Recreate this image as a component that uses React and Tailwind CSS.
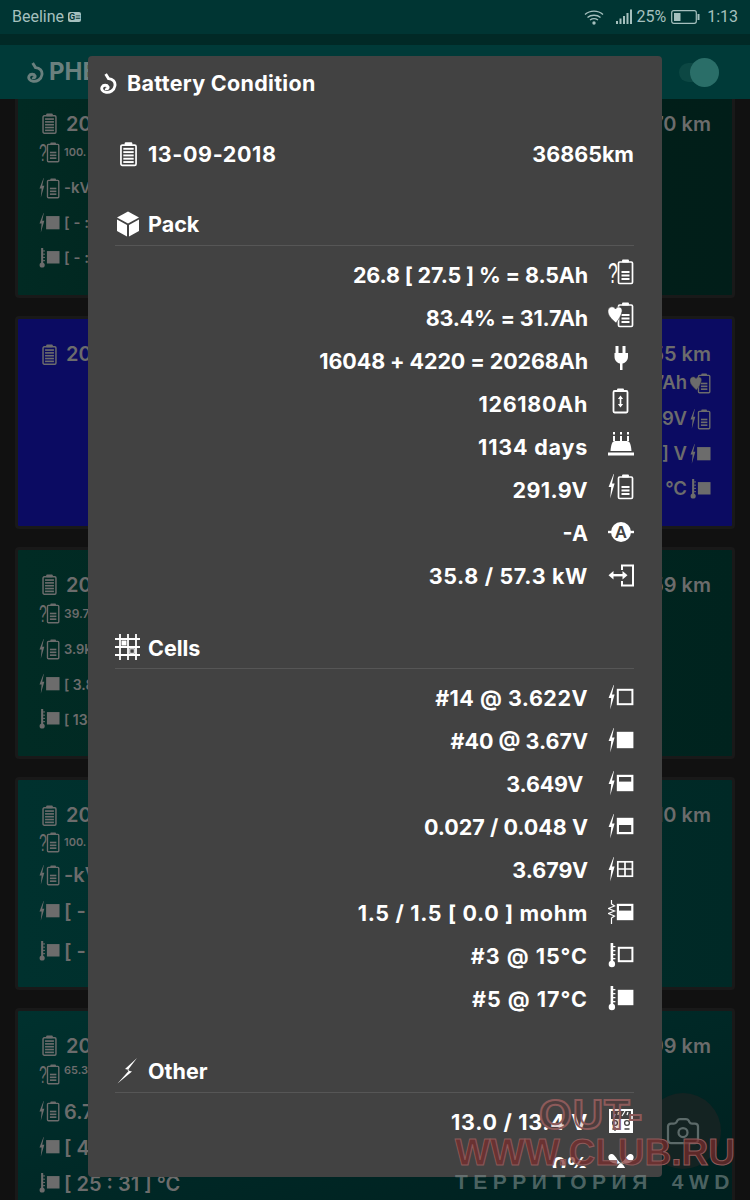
import { Camera } from 'lucide-react'

function Bolt() {
  return <polygon points="5.6,0 0.6,13 3.2,13 2.2,24.5 6.6,9.5 4,9.5 6,0" fill="currentColor" />
}

function Therm() {
  return (
    <g fill="currentColor">
      <rect x="2.6" y="0" width="2.6" height="20" />
      <circle cx="3.9" cy="21" r="3.2" />
      <rect x="5" y="3" width="2.4" height="1.3" />
      <rect x="5" y="7" width="2.4" height="1.3" />
      <rect x="5" y="11" width="2.4" height="1.3" />
      <rect x="5" y="15" width="2.4" height="1.3" />
    </g>
  )
}

function BatteryShape({ x = 10.5 }) {
  return (
    <g>
      <rect x={x} y="3" width="14" height="21.5" rx="1.2" fill="none" stroke="currentColor" strokeWidth="1.7" />
      <rect x={x + 3.5} y="0.5" width="7" height="3" rx="1" fill="currentColor" />
      <rect x={x + 3} y="12" width="8" height="2" fill="currentColor" />
      <rect x={x + 3} y="15.5" width="8" height="2" fill="currentColor" />
      <rect x={x + 3} y="19" width="8" height="2" fill="currentColor" />
    </g>
  )
}

function Icon({ name, className = 'h-[26px] w-[26px]' }) {
  return (
    <svg viewBox="0 0 26 26" className={`shrink-0 ${className}`}>
      {name === 'q' && (
        <g>
          <text transform="translate(0 24) scale(0.58 1)" fontSize="30" fill="currentColor" className="font-['Liberation_Sans',sans-serif] font-normal">?</text>
          <BatteryShape />
        </g>
      )}
      {name === 'heart' && (
        <g>
          <BatteryShape />
          <path d="M8 21 C3 16.500 -0.500 13 0 8.500 C0.500 4.500 5.500 3.500 7.500 7 C9.500 3.500 15 5 14 9.500 C13.400 13.500 11 17 8 21Z" fill="currentColor" stroke="#424242" strokeWidth="0.6" />
        </g>
      )}
      {name === 'plug' && (
        <path d="M7.500 1h3v7h4V1h3v7h2.500v3.500c0 4-2.600 6.500-5.500 7V25h-2.500v-6.500c-3-.5-5.500-3-5.500-7V8h1z" fill="currentColor" />
      )}
      {name === 'updown' && (
        <g>
          <rect x="5.5" y="3" width="14" height="21.5" rx="1.2" fill="none" stroke="currentColor" strokeWidth="1.8" />
          <rect x="9" y="0.5" width="7" height="3" rx="1" fill="currentColor" />
          <path d="M12.5 7.5l2.6 3.5h-1.800v5h1.800l-2.600 3.500-2.600-3.500h1.800v-5H9.900z" fill="currentColor" />
        </g>
      )}
      {name === 'cake' && (
        <g fill="currentColor">
          <rect x="5" y="1" width="2" height="2.500" />
          <rect x="12" y="1" width="2" height="2.500" />
          <rect x="19" y="1" width="2" height="2.500" />
          <rect x="5" y="5" width="2" height="5" />
          <rect x="12" y="5" width="2" height="5" />
          <rect x="19" y="5" width="2" height="5" />
          <path d="M2.500 20 C3 14 4 10 7 10 H19 C22 10 23 14 23.500 20Z" />
          <rect x="0" y="21.500" width="26" height="3" />
        </g>
      )}
      {name === 'bolt' && (
        <g>
          <Bolt />
          <BatteryShape />
        </g>
      )}
      {name === 'amp' && (
        <g>
          <rect x="0" y="11.8" width="26" height="2.4" fill="currentColor" />
          <circle cx="13" cy="13" r="10" fill="currentColor" />
          <text x="13" y="19.2" textAnchor="middle" fontSize="17" fill="#424242" className="font-['Liberation_Sans',sans-serif] font-bold">A</text>
        </g>
      )}
      {name === 'login' && (
        <g>
          <path d="M14 8V3.500h11v20H14V19" fill="none" stroke="currentColor" strokeWidth="2" />
          <rect x="4" y="12" width="12" height="2.400" fill="currentColor" />
          <path d="M0.500 13.200l5-4.200v8.400zM19.500 13.200l-5-4.200v8.400z" fill="currentColor" />
        </g>
      )}
      {name === 'cellEmpty' && (
        <g>
          <Bolt />
          <rect x="9.8" y="4.8" width="14.6" height="14.4" fill="none" stroke="currentColor" strokeWidth="2" />
        </g>
      )}
      {name === 'cellFull' && (
        <g>
          <Bolt />
          <rect x="8.8" y="3.8" width="16.6" height="16.4" fill="currentColor" />
        </g>
      )}
      {name === 'cellLow' && (
        <g>
          <Bolt />
          <rect x="8.8" y="3.8" width="16.6" height="16.4" fill="currentColor" />
          <rect x="11" y="6" width="12.2" height="4.6" fill="#424242" />
        </g>
      )}
      {name === 'cellMid' && (
        <g>
          <Bolt />
          <rect x="8.8" y="3.8" width="16.6" height="16.4" fill="currentColor" />
          <rect x="11" y="11" width="12.2" height="7" fill="#424242" />
        </g>
      )}
      {name === 'cellGrid' && (
        <g>
          <Bolt />
          <g fill="none" stroke="currentColor" strokeWidth="1.7">
            <rect x="9.8" y="4.8" width="14.6" height="14.4" />
            <path d="M17 5v14M10 12h14" />
          </g>
        </g>
      )}
      {name === 'cellOhm' && (
        <g>
          <path d="M3.5 0v4l3 2-6 2.5 6 2.5-6 2.5 6 2.5-3 2v6" fill="none" stroke="currentColor" strokeWidth="1.2" />
          <rect x="8.8" y="3.8" width="16.6" height="16.4" fill="currentColor" />
          <rect x="11" y="6" width="12.2" height="4.6" fill="#424242" />
        </g>
      )}
      {name === 'thermEmpty' && (
        <g>
          <Therm />
          <rect x="10.8" y="4.8" width="13.6" height="13.4" fill="none" stroke="currentColor" strokeWidth="2" />
        </g>
      )}
      {name === 'thermFull' && (
        <g>
          <Therm />
          <rect x="9.8" y="3.8" width="15.6" height="15.4" fill="currentColor" />
        </g>
      )}
      {name === 'gauge' && (
        <g>
          <rect x="1" y="1" width="24" height="24" fill="currentColor" />
          <path d="M3 3h20v8H3z" fill="#424242" />
          <path d="M6 9l1-3M10 7l.5-3M14 8l3-5M19 7l1-3" stroke="currentColor" strokeWidth="1.2" />
          <circle cx="7" cy="15" r="2.4" fill="none" stroke="#424242" strokeWidth="1.3" />
          <circle cx="19" cy="15" r="2.4" fill="none" stroke="#424242" strokeWidth="1.3" />
          <path d="M4.500 21h5M7 19v4M16.500 21h5" stroke="#424242" strokeWidth="1.3" />
        </g>
      )}
      {name === 'fan' && (
        <g fill="currentColor">
          <path d="M13 12C9 10 7 2 3 3 -1 4 0 9 3 11 6 13 10 13 13 12Z" />
          <path d="M13 12C17 10 19 2 23 3 27 4 26 9 23 11 20 13 16 13 13 12Z" />
          <path d="M13 12C9 14 6 21 9 24 12 26 16 26 18 23 19 19 16 14 13 12Z" />
        </g>
      )}
    </svg>
  )
}

function HookLogo({ className }) {
  return (
    <svg viewBox="0 0 18 22" className={className}>
      <path d="M6 1L9 5.800C13.500 6 16.500 9 15.800 13.500 15 18.500 10.500 20.800 6.500 20.300 2.500 19.800 1 17 2.300 14.500 3.500 12.300 7.500 12.300 8.500 14.500 9 16 7.500 17.300 5.500 16.500" fill="none" stroke="currentColor" strokeWidth="3" />
    </svg>
  )
}

function DateBattery({ className }) {
  return (
    <svg viewBox="0 0 18 26" className={className}>
      <rect x="1" y="3.500" width="16" height="21.500" rx="1.500" fill="none" stroke="currentColor" strokeWidth="1.8" />
      <rect x="5" y="0.500" width="8" height="3.500" rx="1" fill="currentColor" />
      <g fill="currentColor">
        <rect x="3.500" y="6.500" width="11" height="2" />
        <rect x="3.500" y="10" width="11" height="2" />
        <rect x="3.500" y="13.500" width="11" height="2" />
        <rect x="3.500" y="17" width="11" height="2" />
        <rect x="3.500" y="20.500" width="11" height="2" />
      </g>
    </svg>
  )
}

function Cube() {
  return (
    <svg viewBox="0 0 24 26" className="h-[26px] w-[24px]">
      <path d="M12 0.500L23 6.500 12 12.500 1 6.500z" fill="currentColor" />
      <path d="M1 8.500L11 14v11.500L1 20z" fill="currentColor" />
      <path d="M23 8.500L13 14v11.500L23 20z" fill="currentColor" />
    </svg>
  )
}

function CellsGrid() {
  return (
    <svg viewBox="0 0 25 26" className="h-[26px] w-[25px]">
      <g stroke="currentColor" strokeWidth="1.800">
        <path d="M5 0v26M13 0v26M21 0v26M0 5h25M0 13h25M0 21h25" />
      </g>
      <rect x="6.500" y="6.500" width="5" height="5" fill="currentColor" />
      <rect x="14.800" y="14.800" width="4.500" height="4.500" fill="none" stroke="currentColor" strokeWidth="1" />
    </svg>
  )
}

function Lightning() {
  return (
    <svg viewBox="0 0 22 26" className="h-[26px] w-[22px]">
      <polygon points="20,0 8,11 12.500,12 0.500,25.500 15,13.500 10.500,12.500" fill="currentColor" />
    </svg>
  )
}

const cards = [
  {
    bg: 'bg-linear-to-r from-[#012a23] via-[#012019] to-[#011e19]',
    head: '70 km',
    rows: [
      { icon: 'q', text: '100.', size: 'text-[11px]' },
      { icon: 'bolt', text: '-kV', size: 'text-[15px]', mt: 'mt-[6px]' },
      { icon: 'solid', text: '[ - :', size: 'text-[15px]', mt: 'mt-[5px]' },
      { icon: 'tsolid', text: '[ - :', size: 'text-[15px]', mt: 'mt-[5px]' },
    ],
    side: [],
  },
  {
    bg: 'bg-[#0b0b62]',
    head: '55 km',
    rows: [],
    side: [
      { icon: 'heart', text: '7Ah' },
      { icon: 'bolt', text: '9V', mt: 'mt-[6px]' },
      { icon: 'solid', text: '] V', mt: 'mt-[5px]' },
      { icon: 'tsolid', text: '°C', mt: 'mt-[5px]' },
    ],
  },
  {
    bg: 'bg-linear-to-r from-[#012b24] to-[#00231e]',
    head: '59 km',
    rows: [
      { icon: 'q', text: '39.7', size: 'text-[12px]' },
      { icon: 'bolt', text: '3.9k', size: 'text-[13px]', mt: 'mt-[6px]' },
      { icon: 'solid', text: '[ 3.8', size: 'text-[14px]', mt: 'mt-[5px]' },
      { icon: 'tsolid', text: '[ 13 :', size: 'text-[14px]', mt: 'mt-[5px]' },
    ],
    side: [],
  },
  {
    bg: 'bg-linear-to-r from-[#00312e] to-[#002926]',
    head: '10 km',
    rows: [
      { icon: 'q', text: '100.', size: 'text-[11px]', mt: '-mt-[2px]' },
      { icon: 'bolt', text: '-kV', size: 'text-[20px]', mt: 'mt-[3px]' },
      { icon: 'solid', text: '[ -', size: 'text-[20px]', mt: 'mt-[6px]' },
      { icon: 'tsolid', text: '[ -', size: 'text-[20px]', mt: 'mt-[10px]' },
    ],
    side: [],
  },
  {
    bg: 'bg-linear-to-br from-[#00312e] to-[#001f1e]',
    head: '99 km',
    rows: [
      { icon: 'q', text: '65.3', size: 'text-[11px]', up: true },
      { icon: 'bolt', text: '6.7', size: 'text-[20px]', mt: 'mt-[7px]' },
      { icon: 'solid', text: '[ 4', size: 'text-[20px]', mt: 'mt-[6px]' },
      { icon: 'tsolid', text: '[ 25 : 31 ] °C', size: 'text-[20px]', mt: 'mt-[6px]' },
    ],
    side: [],
  },
]

function CardIcon({ icon }) {
  if (icon === 'solid') return <Icon name="cellFull" className="h-[21px] w-[21px]" />
  if (icon === 'tsolid') return <Icon name="thermFull" className="h-[21px] w-[21px]" />
  return <Icon name={icon} className="h-[21px] w-[21px]" />
}

function Card({ card }) {
  return (
    <div className={`flex h-[212.5px] shrink-0 justify-between rounded-sm border-[3px] border-[#191919] px-[21px] pt-[21px] text-[#6c6c6c] ${card.bg}`}>
      <div className="flex flex-col">
        <div className="flex h-[28px] items-center gap-[9px] pl-[3px] text-[20px] font-semibold">
          <DateBattery className="h-[21px] w-[15px]" />
          <span>20</span>
        </div>
        {card.rows.map((row, i) => (
          <div key={i} className={`flex h-[30px] items-center gap-[4px] font-semibold ${row.mt || ''}`}>
            <CardIcon icon={row.icon} />
            <span className={`whitespace-nowrap ${row.size} ${row.up ? '-mt-[8px]' : ''}`}>{row.text}</span>
          </div>
        ))}
      </div>
      <div className="flex flex-col items-end">
        <div className="flex h-[28px] items-center text-[20px] font-semibold">{card.head}</div>
        {card.side.map((row, i) => (
          <div key={i} className={`flex h-[30px] items-center gap-[3px] text-[18.5px] font-semibold ${row.mt || ''}`}>
            <span>{row.text}</span>
            <CardIcon icon={row.icon} />
          </div>
        ))}
      </div>
    </div>
  )
}

function Row({ text, icon, up, track }) {
  return (
    <div className="flex h-[43px] items-center justify-end gap-[20px] whitespace-pre">
      <span className={`mt-[2px] ${track || ''}`}>{text}</span>
      <Icon name={icon} className={`h-[26px] w-[26px] ${up ? '-translate-y-[2px]' : ''}`} />
    </div>
  )
}

function Section({ logo, title, rows }) {
  return (
    <section className="pb-[29.5px]">
      <div className="flex h-[43px] items-center gap-[8px] border-b border-[#565656]">
        <span className="flex w-[25px] justify-center">{logo}</span>
        <span className="mt-[2px]">{title}</span>
      </div>
      <div className="pt-[7px]">
        {rows.map((row) => (
          <Row key={row.text} {...row} />
        ))}
      </div>
    </section>
  )
}

const pack = [
  { text: '26.8 [ 27.5 ] % = 8.5Ah', icon: 'q', up: true, track: 'tracking-[-0.15px]' },
  { text: '83.4% = 31.7Ah', icon: 'heart', up: true, track: 'tracking-[-0.2px]' },
  { text: '16048 + 4220 = 20268Ah', icon: 'plug', up: true, track: 'tracking-[-0.1px]' },
  { text: '126180Ah', icon: 'updown', up: true, track: 'tracking-[0.7px]' },
  { text: '1134 days', icon: 'cake', up: true, track: 'tracking-[0.8px]' },
  { text: '291.9V', icon: 'bolt', up: true, track: 'tracking-[0.4px]' },
  { text: '-A', icon: 'amp' },
  { text: '35.8 / 57.3 kW', icon: 'login', track: 'tracking-[0.65px]' },
]

const cells = [
  { text: '#14 @ 3.622V', icon: 'cellEmpty', track: 'tracking-[0.5px]' },
  { text: '#40 @ 3.67V', icon: 'cellFull' },
  { text: '3.649V ', icon: 'cellLow', track: 'tracking-[-0.2px]' },
  { text: '0.027 / 0.048 V', icon: 'cellMid' },
  { text: '3.679V', icon: 'cellGrid' },
  { text: '1.5 / 1.5 [ 0.0 ] mohm', icon: 'cellOhm', track: 'tracking-[0.65px]' },
  { text: '#3 @ 15°C', icon: 'thermEmpty', track: 'tracking-[1px]' },
  { text: '#5 @ 17°C', icon: 'thermFull', track: 'tracking-[1px]' },
]

const other = [
  { text: '13.0 / 13.4 V', icon: 'gauge', track: 'tracking-[0.7px]' },
  { text: '0%', icon: 'fan' },
]

function StatusBar() {
  return (
    <div className="flex h-[34px] items-center justify-between bg-[#003533] px-[12px] font-['Roboto',sans-serif] text-[16px] text-[#a5c0be]">
      <div className="flex items-center gap-[4px]">
        <span>Beeline</span>
        <span className="rounded-[2px] bg-[#a5c0be] px-[1px] text-[9px] font-bold leading-[10px] text-[#003533]">G≡</span>
      </div>
      <div className="flex items-center">
        <svg viewBox="0 0 20 16" className="h-[16px] w-[20px]">
          <g fill="none" stroke="currentColor" strokeWidth="1.400">
            <path d="M1 5.500C6 1 14 1 19 5.500M3.500 8.500C7 5.500 13 5.500 16.500 8.500M6 11C8.500 9.300 11.500 9.300 14 11" />
          </g>
          <circle cx="10" cy="14" r="1.700" fill="currentColor" />
        </svg>
        <svg viewBox="0 0 17 16" className="ml-[12px] h-[16px] w-[17px]">
          <g fill="currentColor">
            <rect x="0" y="12" width="2" height="3" />
            <rect x="3.500" y="9.500" width="2" height="5.500" />
            <rect x="7" y="7" width="2" height="8" />
            <rect x="10.500" y="4" width="2" height="11" />
            <rect x="14" y="0.500" width="2" height="14.500" />
          </g>
        </svg>
        <span className="ml-[3px]">25%</span>
        <svg viewBox="0 0 29 14" className="ml-[5px] h-[14px] w-[29px]">
          <rect x="0.700" y="0.700" width="24.600" height="12.600" rx="2" fill="none" stroke="currentColor" strokeWidth="1.200" />
          <rect x="3" y="3" width="6.500" height="8" fill="currentColor" />
          <rect x="26.500" y="4" width="2" height="6" fill="currentColor" />
        </svg>
        <span className="ml-[7px]">1:13</span>
      </div>
    </div>
  )
}

export default function App() {
  return (
    <div className="relative h-[1200px] w-[750px] overflow-hidden bg-[#111111] font-['Inter','Noto_Sans',sans-serif]">
      <StatusBar />
      <div className="h-[11px] bg-[#012926]" />
      <header className="relative z-10 flex h-[54px] items-center justify-between bg-[#003a38] pl-[27px] pr-[31px] text-[#6a807e]">
        <div className="flex items-center gap-[5px] text-[24px] font-bold">
          <HookLogo className="h-[21px] w-[17px]" />
          <span>PHE</span>
        </div>
        <div className="relative h-[19px] w-[40px] rounded-full bg-[#0c4743]">
          <span className="absolute right-0 -top-[5px] h-[29px] w-[29px] rounded-full bg-[#2a6e68]" />
        </div>
      </header>

      <main className="-mt-[13.500px] flex flex-col gap-[18px] px-[15px]">
        {cards.map((card) => (
          <Card key={card.head} card={card} />
        ))}
      </main>

      <div className="absolute left-[645px] top-[1093px] flex h-[76px] w-[76px] items-center justify-center rounded-full bg-[#142322]">
        <Camera className="h-[36px] w-[36px] text-[#5c6a69]" strokeWidth={1.5} />
      </div>

      <div className="absolute left-[88px] top-[56px] z-20 flex h-[1121px] w-[574px] flex-col rounded-sm bg-[#424242] pb-[9px] text-[21.5px] font-bold text-white">
        <div className="flex h-[54px] shrink-0 items-center gap-[10px] pl-[12px]">
          <HookLogo className="h-[21px] w-[17px]" />
          <span className="tracking-[0.3px]">Battery Condition</span>
        </div>
        <div className="flex-1 overflow-hidden pl-[27px] pr-[28px] pt-[22.500px]">
          <div className="mb-[27px] flex h-[43px] items-center justify-between">
            <div className="flex items-center gap-[11px] pl-[5px]">
              <DateBattery className="h-[26px] w-[17px]" />
              <span className="mt-[1px] tracking-[0.6px]">13-09-2018</span>
            </div>
            <span className="mt-[1px]">36865km</span>
          </div>
          <Section logo={<Cube />} title="Pack" rows={pack} />
          <Section logo={<CellsGrid />} title="Cells" rows={cells} />
          <Section logo={<Lightning />} title="Other" rows={other} />
        </div>
      </div>

      <div className="pointer-events-none absolute left-[455px] top-[1094px] z-30 w-[280px] font-['Liberation_Sans',sans-serif] font-bold">
        <div className="pl-[84px] text-[42px] leading-[42px] tracking-[1px] text-[#7a2a2a]/20 [-webkit-text-stroke:2px_#8c5a5a]">OUT-</div>
        <div className="flex justify-between text-[37px] leading-[34px] text-[#7d2b2b]/70 [-webkit-text-stroke:1px_#8c5a5a]">
          <span>WWW.</span>
          <span>CLUB.RU</span>
        </div>
        <div className="mt-[2px] flex justify-between text-[21px] leading-[20px] tracking-[5.500px] text-[#7f8f8e]/60">
          <span>ТЕРРИТОРИЯ</span>
          <span>4WD</span>
        </div>
      </div>
    </div>
  )
}
